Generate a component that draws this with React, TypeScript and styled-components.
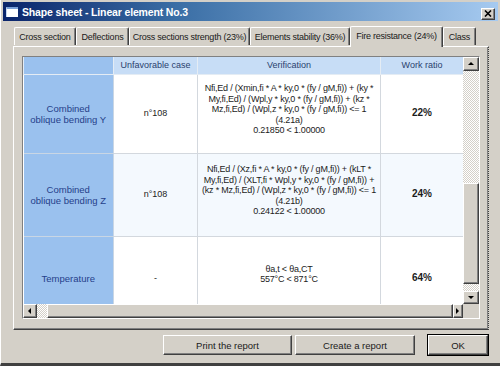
import styled, { createGlobalStyle, css } from 'styled-components'

const GlobalStyle = createGlobalStyle`
  html, body { margin: 0; padding: 0; background: #d4d0c8; }
  body { font-family: "Liberation Sans", Arial, sans-serif; font-size: 9px; color: #1a1a1a; }
  * { box-sizing: border-box; }
`

const tabs = [
    { label: 'Cross section', w: 62 },
    { label: 'Deflections', w: 53 },
    { label: 'Cross sections strength (23%)', w: 121 },
    { label: 'Elements stability (36%)', w: 100 },
    { label: 'Fire resistance (24%)', w: 93, active: true },
    { label: 'Class', w: 33 },
]

const rows = [
    {
        name: ['Combined', 'oblique bending Y'],
        unfav: 'n°108',
        verif: [
            'Nfi,Ed / (Xmin,fi * A * ky,0 * (fy / gM,fi)) + (ky *',
            'My,fi,Ed) / (Wpl,y * ky,0 * (fy / gM,fi)) + (kz *',
            'Mz,fi,Ed) / (Wpl,z * ky,0 * (fy / gM,fi)) <= 1',
            '(4.21a)',
            '0.21850 < 1.00000',
        ],
        ratio: '22%',
        h: 79,
        tint: false,
    },
    {
        name: ['Combined', 'oblique bending Z'],
        unfav: 'n°108',
        verif: [
            'Nfi,Ed / (Xz,fi * A * ky,0 * (fy / gM,fi)) + (kLT *',
            'My,fi,Ed) / (XLT,fi * Wpl,y * ky,0 * (fy / gM,fi)) +',
            '(kz * Mz,fi,Ed) / (Wpl,z * ky,0 * (fy / gM,fi)) <= 1',
            '(4.21b)',
            '0.24122 < 1.00000',
        ],
        ratio: '24%',
        h: 83,
        tint: true,
    },
    {
        name: ['Temperature'],
        unfav: '-',
        verif: ['θa,t < θa,CT', '557°C < 871°C'],
        ratio: '64%',
        h: 84,
        tint: false,
    },
]

function Arrow({ dir }: { dir: 'up' | 'down' | 'left' | 'right' }) {
    const pts = {
        up: '1,5 4,2 7,5',
        down: '1,2 4,5 7,2',
        left: '5,1 2,4 5,7',
        right: '2,1 5,4 2,7',
    }[dir]
    return (
        <svg width="8" height="8" viewBox="0 0 8 8" aria-hidden="true">
            <polygon points={pts} fill="#000" />
        </svg>
    )
}

export default function App() {
    return (
        <>
            <GlobalStyle />
            <Window>
                <TitleBar>
                    <TitleIcon />
                    <TitleText>Shape sheet - Linear element No.3</TitleText>
                    <CloseButton>
                        <svg width="8" height="7" viewBox="0 0 8 7" aria-hidden="true">
                            <path d="M1 0.5 L7 6.5 M7 0.5 L1 6.5" stroke="#000" strokeWidth="1.6" />
                        </svg>
                    </CloseButton>
                </TitleBar>

                <Body>
                    <TabStrip>
                        {tabs.map(t => (
                            <Tab key={t.label} $w={t.w} $active={!!t.active}>{t.label}</Tab>
                        ))}
                    </TabStrip>

                    <TabPanel>
                        <GridFrame>
                            <GridArea>
                                <TableView>
                                    <Table>
                                        <colgroup>
                                            <col style={{ width: 90 }} />
                                            <col style={{ width: 84 }} />
                                            <col style={{ width: 183 }} />
                                            <col style={{ width: 83 }} />
                                        </colgroup>
                                        <thead>
                                            <tr>
                                                <HeadCell $corner />
                                                <HeadCell>Unfavorable case</HeadCell>
                                                <HeadCell>Verification</HeadCell>
                                                <HeadCell>Work ratio</HeadCell>
                                            </tr>
                                        </thead>
                                        <tbody>
                                            {rows.map(r => (
                                                <Row key={r.name.join(' ')} $h={r.h} $tint={r.tint}>
                                                    <NameCell>{r.name.map(l => <div key={l}>{l}</div>)}</NameCell>
                                                    <Cell>{r.unfav}</Cell>
                                                    <Cell $lift>{r.verif.map(l => <div key={l}>{l}</div>)}</Cell>
                                                    <Cell $bold>{r.ratio}</Cell>
                                                </Row>
                                            ))}
                                        </tbody>
                                    </Table>
                                </TableView>

                                <VScroll>
                                    <ScrollBtn $h={14}><Arrow dir="up" /></ScrollBtn>
                                    <Track $size={112} />
                                    <Thumb />
                                    <Track $size={7} />
                                    <ScrollBtn $h={13}><Arrow dir="down" /></ScrollBtn>
                                </VScroll>

                                <HScroll>
                                    <ScrollBtn $w={14}><Arrow dir="left" /></ScrollBtn>
                                    <Track $size={10} />
                                    <Thumb />
                                    <ScrollBtn $w={10}><Arrow dir="right" /></ScrollBtn>
                                </HScroll>
                                <Corner />
                            </GridArea>
                        </GridFrame>
                    </TabPanel>

                    <ButtonRow>
                        <Button $w={129}>Print the report</Button>
                        <Button $w={120}>Create a report</Button>
                        <Button $w={60} $default>OK</Button>
                    </ButtonRow>
                </Body>
            </Window>
        </>
    )
}


/*___Styling___*/

const Window = styled.div`
    width: 500px;
    height: 366px;
    padding: 2px 2px 0 2px;
    background: #d4d0c8;
    border-left: 1px solid #fff;
    border-bottom: 3px solid #404040;
    overflow: hidden;
`

const TitleBar = styled.div`
    height: 19px;
    display: flex;
    align-items: center;
    padding: 0 3px 0 3px;
    gap: 4px;
    background: linear-gradient(to right, #0a246a 0%, #3a6ea5 35%, #a6caf0 100%);
`

const TitleIcon = styled.div`
    width: 12px;
    height: 10px;
    background: #fff;
    border-top: 2px solid #7aa0d8;
    border-left: 1px solid #c8d8f0;
    flex: none;
`

const TitleText = styled.span`
    flex: 1;
    color: #fff;
    font-weight: bold;
    font-size: 10.5px;
    letter-spacing: -0.15px;
    white-space: nowrap;
`

const CloseButton = styled.div`
    width: 14px;
    height: 12px;
    margin-top: 4px;
    display: flex;
    align-items: center;
    justify-content: center;
    background: #d4d0c8;
    border: 1px solid;
    border-color: #fff #404040 #404040 #fff;
    box-shadow: inset -1px -1px #808080;
`

const Body = styled.div`
    padding: 4px 9px 0 10px;
`

const TabStrip = styled.div`
    display: flex;
    align-items: flex-end;
    height: 21px;
    padding-left: 1px;
    position: relative;
    z-index: 1;
`

const Tab = styled.div<{ $w: number; $active: boolean }>`
    width: ${p => p.$w}px;
    height: 18px;
    margin-bottom: 1px;
    display: flex;
    align-items: center;
    justify-content: center;
    white-space: nowrap;
    font-size: 9px;
    letter-spacing: -0.25px;
    background: #d4d0c8;
    border-top: 1px solid #fff;
    border-left: 1px solid #fff;
    border-right: 1px solid #404040;
    box-shadow: inset -1px 0 #808080;
    border-radius: 2px 2px 0 0;

    ${p => p.$active && css`
        height: 21px;
        margin-bottom: -1px;
        padding-bottom: 2px;
    `}
`

const TabPanel = styled.div`
    height: 284px;
    padding: 9px 7px 0 8px;
    border-top: 1px solid #fff;
    border-left: 1px solid #fff;
    border-right: 1px dotted #404040;
    border-bottom: 1px solid #404040;
    box-shadow: inset -1px -1px #808080;
`

const GridFrame = styled.div`
    width: 458px;
    height: 263px;
    border: 1px solid;
    border-color: #808080 #fff #fff #808080;
`

const GridArea = styled.div`
    display: grid;
    grid-template-columns: 440px 16px;
    grid-template-rows: 247px 14px;
    background: #fff;
`

const TableView = styled.div`
    overflow: hidden;
`

const Table = styled.table`
    border-collapse: collapse;
    table-layout: fixed;
    width: 440px;
    font-size: 9px;
`

const HeadCell = styled.th<{ $corner?: boolean }>`
    height: 17px;
    padding: 0;
    font-weight: normal;
    color: #2a3f6e;
    background: #c7ddf6;
    border: 1px solid #e4ecf4;
    border-top: none;
    text-align: center;

    ${p => p.$corner && css`
        background: #9ac1ee;
    `}
`

const Row = styled.tr<{ $h: number; $tint: boolean }>`
    height: ${p => p.$h}px;
    background: ${p => (p.$tint ? '#f4f9fe' : '#fff')};
`

const Cell = styled.td<{ $bold?: boolean; $lift?: boolean }>`
    padding: 0 1px;
    text-align: center;
    vertical-align: middle;
    line-height: 10.5px;
    color: #1c1c1c;
    border: 1px solid #d3d8de;
    font-weight: ${p => (p.$bold ? 'bold' : 'normal')};
    font-size: ${p => (p.$bold ? '10px' : '9px')};
    white-space: nowrap;

    ${p => p.$lift && css`
        padding-bottom: 8px;
        letter-spacing: -0.22px;
    `}
`

const NameCell = styled.td`
    padding: 0;
    text-align: center;
    vertical-align: middle;
    line-height: 11px;
    font-size: 9.5px;
    color: #25408a;
    background: #9ac1ee;
    border: 1px solid #c9d6e4;
    border-left: none;
`

const checker = css`
    background: repeating-conic-gradient(#fff 0 25%, #d4d0c8 0 50%) 0 0 / 2px 2px;
`

const VScroll = styled.div`
    display: flex;
    flex-direction: column;
    ${checker};
`

const HScroll = styled.div`
    display: flex;
    ${checker};
`

const ScrollBtn = styled.div<{ $w?: number; $h?: number }>`
    width: ${p => p.$w ?? 16}px;
    height: ${p => p.$h ?? 14}px;
    flex: none;
    display: flex;
    align-items: center;
    justify-content: center;
    background: #d4d0c8;
    border: 1px solid;
    border-color: #fff #404040 #404040 #fff;
    box-shadow: inset -1px -1px #808080;
`

const Track = styled.div<{ $size: number }>`
    flex: 0 0 ${p => p.$size}px;
`

const Thumb = styled.div`
    flex: 1;
    background: #d4d0c8;
    border: 1px solid;
    border-color: #fff #404040 #404040 #fff;
    box-shadow: inset -1px -1px #808080;
`

const Corner = styled.div`
    background: #d4d0c8;
`

const ButtonRow = styled.div`
    display: flex;
    justify-content: flex-end;
    align-items: center;
    padding: 5px 1px 0 0;
    gap: 3px;
`

const Button = styled.div<{ $w: number; $default?: boolean }>`
    width: ${p => p.$w}px;
    height: 20px;
    display: flex;
    align-items: center;
    justify-content: center;
    font-size: 9.5px;
    background: #d4d0c8;
    border: 1px solid;
    border-color: #fff #404040 #404040 #fff;
    box-shadow: inset -1px -1px #808080;

    ${p => p.$default && css`
        margin-left: 10px;
        outline: 1px solid #000;
        outline-offset: 0;
    `}
`
